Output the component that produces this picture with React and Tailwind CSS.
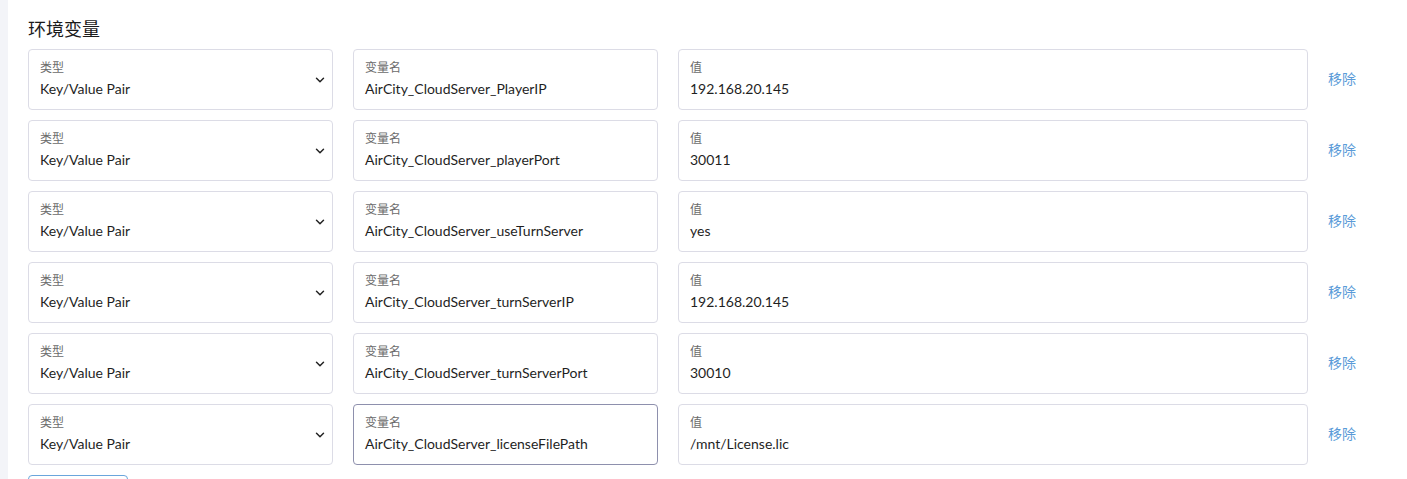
import { ChevronDown } from "lucide-react";

const rows = [
  { name: "AirCity_CloudServer_PlayerIP", value: "192.168.20.145" },
  { name: "AirCity_CloudServer_playerPort", value: "30011" },
  { name: "AirCity_CloudServer_useTurnServer", value: "yes" },
  { name: "AirCity_CloudServer_turnServerIP", value: "192.168.20.145" },
  { name: "AirCity_CloudServer_turnServerPort", value: "30010" },
  { name: "AirCity_CloudServer_licenseFilePath", value: "/mnt/License.lic", focused: true },
];

function Field({ label, value, className = "", focused = false, select = false }) {
  return (
    <div
      className={`relative h-[61px] rounded-[4px] border bg-white pl-[11px] pt-[10px] ${
        focused ? "border-[#8e90ad]" : "border-[#dcdce6]"
      } ${className}`}
    >
      <div className="text-[12px] leading-[16px] text-[#6b6b6b]">{label}</div>
      <div className="mt-[3px] text-[14px] leading-[20px] text-[#1f1f1f]">{value}</div>
      {select && (
        <ChevronDown
          size={14}
          strokeWidth={2.5}
          className="absolute right-[5px] top-[23px] text-[#222]"
        />
      )}
    </div>
  );
}

export default function App() {
  return (
    <div
      className="flex h-[479px] overflow-hidden bg-white"
      style={{ fontFamily: "Lato, 'Noto Sans CJK SC', sans-serif" }}
    >
      <div className="w-[8px] shrink-0 bg-[#f3f4f8]" />
      <div className="flex-1 pl-[20px] pt-[18px]">
        <h2 className="text-[18px] leading-[22px] text-[#1a1a1a]">环境变量</h2>
        <div className="mt-[9px] flex flex-col gap-[10px]">
          {rows.map((r) => (
            <div key={r.name} className="flex items-center">
              <Field label="类型" value="Key/Value Pair" className="w-[305px]" select />
              <Field
                label="变量名"
                value={r.name}
                focused={r.focused}
                className="ml-[20px] w-[305px]"
              />
              <Field label="值" value={r.value} className="ml-[20px] w-[630px]" />
              <button className="ml-[20px] -mt-[2px] text-[14px] text-[#5a9bd8]">移除</button>
            </div>
          ))}
        </div>
        <button className="mt-[10px] h-[30px] w-[100px] rounded-[4px] border border-[#6aa6dc] bg-white" />
      </div>
    </div>
  );
}
